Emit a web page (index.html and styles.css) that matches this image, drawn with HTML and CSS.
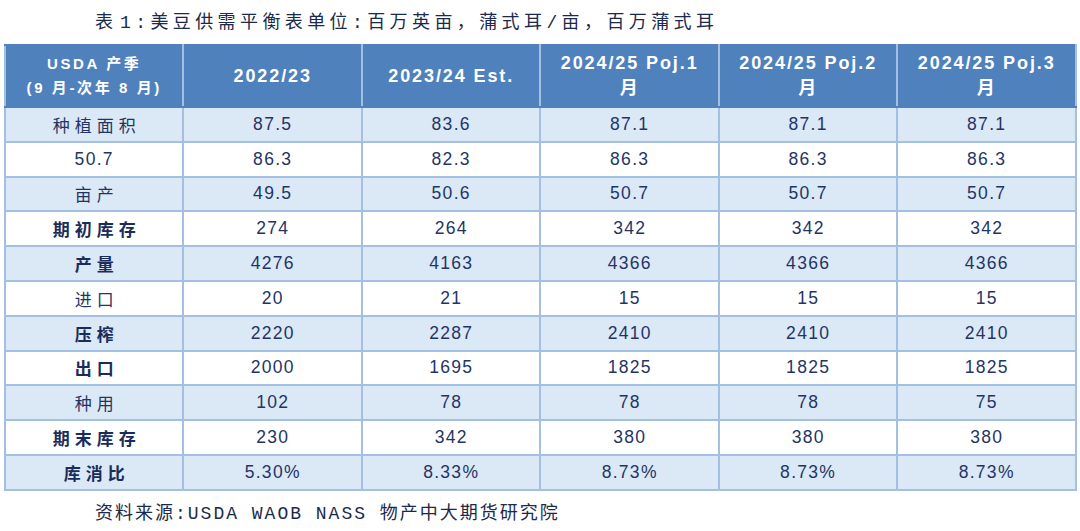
FILE: index.html
```html
<!DOCTYPE html>
<html lang="zh-CN">
<head>
<meta charset="utf-8">
<title>美豆供需平衡表</title>
<link rel="stylesheet" href="styles.css">
</head>
<body>
<div class="page">
  <div class="title"><span class="tight">表 </span>1:美豆供需平衡表单位:百万英亩，蒲式耳/亩，百万蒲式耳</div>
  <table class="sheet">
    <colgroup>
      <col class="c"><col class="c"><col class="c"><col class="c"><col class="c"><col class="c">
    </colgroup>
    <thead>
      <tr class="head">
        <th class="season"><span>USDA 产季</span><span>(9 月-次年 8 月)</span></th>
        <th>2022/23</th>
        <th>2023/24 Est.</th>
        <th>2024/25 Poj.1<br>月</th>
        <th>2024/25 Poj.2<br>月</th>
        <th>2024/25 Poj.3<br>月</th>
      </tr>
    </thead>
    <tbody>
      <tr class="alt"><td class="lbl">种植面积</td><td>87.5</td><td>83.6</td><td>87.1</td><td>87.1</td><td>87.1</td></tr>
      <tr><td>50.7</td><td>86.3</td><td>82.3</td><td>86.3</td><td>86.3</td><td>86.3</td></tr>
      <tr class="alt"><td class="lbl">亩产</td><td>49.5</td><td>50.6</td><td>50.7</td><td>50.7</td><td>50.7</td></tr>
      <tr><td class="lbl strong">期初库存</td><td>274</td><td>264</td><td>342</td><td>342</td><td>342</td></tr>
      <tr class="alt"><td class="lbl strong">产量</td><td>4276</td><td>4163</td><td>4366</td><td>4366</td><td>4366</td></tr>
      <tr><td class="lbl">进口</td><td>20</td><td>21</td><td>15</td><td>15</td><td>15</td></tr>
      <tr class="alt"><td class="lbl strong">压榨</td><td>2220</td><td>2287</td><td>2410</td><td>2410</td><td>2410</td></tr>
      <tr><td class="lbl strong">出口</td><td>2000</td><td>1695</td><td>1825</td><td>1825</td><td>1825</td></tr>
      <tr class="alt"><td class="lbl">种用</td><td>102</td><td>78</td><td>78</td><td>78</td><td>75</td></tr>
      <tr><td class="lbl strong">期末库存</td><td>230</td><td>342</td><td>380</td><td>380</td><td>380</td></tr>
      <tr class="alt"><td class="lbl strong">库消比</td><td>5.30%</td><td>8.33%</td><td>8.73%</td><td>8.73%</td><td>8.73%</td></tr>
    </tbody>
  </table>
  <div class="source">资料来源:USDA WAOB NASS 物产中大期货研究院</div>
</div>
</body>
</html>
```

FILE: styles.css
```css
html, body {
  margin: 0;
  padding: 0;
  background: #ffffff;
}

.page {
  width: 1080px;
  height: 531px;
  display: flex;
  flex-direction: column;
}

.title {
  height: 40px;
  margin-bottom: 4px;
  display: flex;
  align-items: center;
  padding-left: 95px;
  font-family: "Liberation Mono", "Noto Sans CJK SC", monospace;
  font-size: 18px;
  letter-spacing: 4.4px;
  color: #1b2a4a;
  white-space: pre;
}

.title .tight {
  font-family: "Liberation Sans", "Noto Sans CJK SC", sans-serif;
  letter-spacing: 1px;
}

.sheet {
  margin-left: 4px;
  width: 1073px;
  border-collapse: collapse;
  table-layout: fixed;
  border: 2px solid #a3bfe2;
}

.sheet .c {
  width: 16.666%;
}

.sheet th,
.sheet td {
  border: 2px solid #a3bfe2;
  text-align: center;
  vertical-align: middle;
  padding: 0;
}

.head {
  height: 62px;
}

.head th {
  background: #4f81bd;
  color: #ffffff;
  font-family: "Liberation Sans", "Noto Sans CJK SC", sans-serif;
  font-weight: bold;
  font-size: 18px;
  letter-spacing: 1.9px;
  line-height: 25px;
  border-color: #4f81bd #a3bfe2;
}

.head th.season {
  font-size: 15px;
  letter-spacing: 2.6px;
  line-height: 24px;
}

.season span {
  display: block;
}

.sheet tbody tr {
  height: 34.8px;
}

.sheet tbody td {
  font-family: "Liberation Sans", "Noto Sans CJK SC", sans-serif;
  font-size: 17.5px;
  letter-spacing: 1.3px;
  color: #1f3566;
  background: #ffffff;
}

.sheet tbody tr.alt td {
  background: #dbe8f6;
}

.sheet tbody td.lbl {
  font-family: "Noto Sans CJK SC", sans-serif;
  font-size: 17px;
  letter-spacing: 5px;
  padding-left: 5px;
  color: #1f3566;
}

.sheet tbody td.strong {
  font-weight: bold;
  color: #1a2d5a;
}

.source {
  height: 40px;
  display: flex;
  align-items: center;
  padding-left: 95px;
  font-family: "Liberation Mono", "Noto Sans CJK SC", monospace;
  font-size: 18px;
  letter-spacing: 2px;
  color: #1b2a4a;
  white-space: nowrap;
}
```
